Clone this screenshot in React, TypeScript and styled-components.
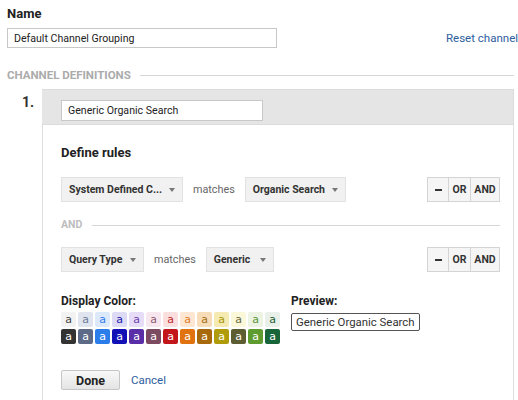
import React from 'react';
import styled, { createGlobalStyle } from 'styled-components';

const GlobalStyle = createGlobalStyle`
  body {
    margin: 0;
    background: #fff;
    font-family: Roboto, "Liberation Sans", Arial, sans-serif;
    color: #222;
  }
`;

const swatches = [
  { light: '#f2f2f2', lightText: '#444', dark: '#333333' },
  { light: '#dfe4ee', lightText: '#6b7b98', dark: '#5d6b88' },
  { light: '#dce9fb', lightText: '#2f7bef', dark: '#2b7de9' },
  { light: '#dcdaf5', lightText: '#1c18a8', dark: '#1211b5' },
  { light: '#e6dcf7', lightText: '#6a40b0', dark: '#5a2ea6' },
  { light: '#f8e6ee', lightText: '#8c5870', dark: '#7c4b61' },
  { light: '#fbdfdf', lightText: '#c0282c', dark: '#c3161a' },
  { light: '#fde6d2', lightText: '#e07a22', dark: '#e0730f' },
  { light: '#f7dcb9', lightText: '#a66f14', dark: '#a8690c' },
  { light: '#f5ebb2', lightText: '#a8960c', dark: '#b09c0b' },
  { light: '#fbf8da', lightText: '#67683c', dark: '#5c5d31' },
  { light: '#edf3e2', lightText: '#58963a', dark: '#5e9c2f' },
  { light: '#e9efe9', lightText: '#1e5e34', dark: '#19653a' },
];

const Operators = () => (
  <ButtonGroup>
    <GroupButton $w={20}>
      <Dash />
    </GroupButton>
    <GroupButton $w={21}>OR</GroupButton>
    <GroupButton $w={28}>AND</GroupButton>
  </ButtonGroup>
);

const App = () => {
  return (
    <Page>
      <GlobalStyle />
      <FieldLabel>Name</FieldLabel>
      <NameRow>
        <TextField $w={270} defaultValue="Default Channel Grouping" />
        <ResetLink href="#">Reset channel</ResetLink>
      </NameRow>

      <SectionHeading>
        <span>CHANNEL DEFINITIONS</span>
        <Rule />
      </SectionHeading>

      <DefinitionRow>
        <Index>1.</Index>
        <Card>
          <CardHeader>
            <TextField $w={202} $h={21} defaultValue="Generic Organic Search" />
          </CardHeader>
          <CardBody>
            <FieldLabel>Define rules</FieldLabel>

            <RuleRow $first>
              <Select $w={122}>System Defined C...</Select>
              <Matches>matches</Matches>
              <Select $w={101}>Organic Search</Select>
              <Operators />
            </RuleRow>

            <Separator>
              <span>AND</span>
              <Rule />
            </Separator>

            <RuleRow>
              <Select $w={83}>Query Type</Select>
              <Matches>matches</Matches>
              <Select $w={68}>Generic</Select>
              <Operators />
            </RuleRow>

            <ColorSection>
              <div>
                <SmallLabel>Display Color:</SmallLabel>
                <SwatchGrid>
                  {swatches.map((s, i) => (
                    <Swatch key={'l' + i} $bg={s.light} $fg={s.lightText}>a</Swatch>
                  ))}
                  {swatches.map((s, i) => (
                    <Swatch key={'d' + i} $bg={s.dark} $fg="#fff">a</Swatch>
                  ))}
                </SwatchGrid>
              </div>
              <div>
                <SmallLabel>Preview:</SmallLabel>
                <Preview>Generic Organic Search</Preview>
              </div>
            </ColorSection>

            <Actions>
              <DoneButton>Done</DoneButton>
              <Link href="#">Cancel</Link>
            </Actions>
          </CardBody>
        </Card>
      </DefinitionRow>
    </Page>
  );
};

export default App;

const Page = styled.div`
  width: 518px;
  height: 400px;
  overflow: hidden;
  box-sizing: border-box;
  padding: 6px 4px 0 7px;
`;

const FieldLabel = styled.div`
  font-size: 13px;
  font-weight: 700;
  line-height: 16px;
  color: #222;
`;

const SmallLabel = styled(FieldLabel)`
  font-size: 12px;
`;

const NameRow = styled.div`
  display: flex;
  align-items: center;
  margin-top: 6px;
  white-space: nowrap;
`;

const TextField = styled.input<{ $w: number; $h?: number }>`
  box-sizing: border-box;
  flex-shrink: 0;
  width: ${(p) => p.$w}px;
  height: ${(p) => p.$h ?? 20}px;
  margin: 0;
  padding: 0 6px;
  border: 1px solid #c8c8c8;
  background: #fff;
  font-family: inherit;
  font-size: 10.6px;
  color: #222;
  outline: none;
`;

const Link = styled.a`
  font-size: 11.5px;
  color: #2d5e9e;
  text-decoration: none;
  margin-left: 11px;
`;

const ResetLink = styled(Link)`
  margin-left: 169px;
  flex-shrink: 0;
`;

const SectionHeading = styled.div`
  display: flex;
  align-items: center;
  margin-top: 19px;
  font-size: 11.5px;
  font-weight: 700;
  line-height: 16px;
  color: #ababab;

  span {
    margin-right: 9px;
  }
`;

const Rule = styled.div`
  flex: 1;
  height: 1px;
  background: #d6d6d6;
`;

const DefinitionRow = styled.div`
  display: flex;
  margin-top: 6px;
`;

const Index = styled.div`
  width: 35px;
  box-sizing: border-box;
  padding: 5px 0 0 15px;
  font-size: 14px;
  font-weight: 700;
  line-height: 16px;
  color: #333;
`;

const Card = styled.div`
  flex: 1;
  display: flex;
  flex-direction: column;
`;

const CardHeader = styled.div`
  height: 36px;
  box-sizing: border-box;
  padding: 9px 0 0 19px;
  background: #e5e5e5;
  border: 1px solid #dcdcdc;
  border-left: none;
`;

const CardBody = styled.div`
  padding: 20px 13px 20px 18px;
  border-left: 1px solid #dedede;
  border-right: 1px solid #dedede;
  background: #fff;
`;

const RuleRow = styled.div<{ $first?: boolean }>`
  display: flex;
  align-items: center;
  margin-top: ${(p) => (p.$first ? 16 : 15)}px;
`;

const Select = styled.div<{ $w: number }>`
  display: flex;
  align-items: center;
  justify-content: space-between;
  width: ${(p) => p.$w}px;
  height: 25px;
  box-sizing: border-box;
  padding: 0 7px 0 7px;
  background: #f1f1f1;
  border: 1px solid #e2e2e2;
  font-size: 10.5px;
  font-weight: 700;
  color: #333;
  white-space: nowrap;

  &::after {
    content: '';
    border-left: 3.5px solid transparent;
    border-right: 3.5px solid transparent;
    border-top: 4px solid #777;
  }
`;

const Matches = styled.span`
  margin: 0 10px;
  font-size: 10.8px;
  color: #666;
`;

const ButtonGroup = styled.div`
  display: flex;
  margin-left: auto;
  height: 23px;
  border: 1px solid #d4d4d4;
  background: #f5f5f5;
`;

const GroupButton = styled.div<{ $w: number }>`
  width: ${(p) => p.$w}px;
  display: flex;
  align-items: center;
  justify-content: center;
  font-size: 10.5px;
  font-weight: 700;
  color: #333;

  & + & {
    border-left: 1px solid #d4d4d4;
  }
`;

const Dash = styled.span`
  width: 7px;
  height: 2px;
  background: #333;
`;

const Separator = styled.div`
  display: flex;
  align-items: center;
  margin-top: 16px;
  font-size: 10.5px;
  font-weight: 700;
  line-height: 14px;
  color: #bdbdbd;

  span {
    margin-right: 10px;
  }
`;

const ColorSection = styled.div`
  display: flex;
  gap: 11px;
  margin-top: 21px;
`;

const SwatchGrid = styled.div`
  display: grid;
  grid-template-columns: repeat(13, 15px);
  grid-auto-rows: 15px;
  column-gap: 2px;
  row-gap: 2px;
  margin-top: 3px;
`;

const Swatch = styled.div<{ $bg: string; $fg: string }>`
  display: flex;
  align-items: center;
  justify-content: center;
  border-radius: 2px;
  background: ${(p) => p.$bg};
  color: ${(p) => p.$fg};
  font-family: "DejaVu Sans", sans-serif;
  font-size: 11px;
  line-height: 1;
`;

const Preview = styled.div`
  display: inline-block;
  margin-top: 4px;
  padding: 0 4px;
  height: 18px;
  line-height: 16px;
  box-sizing: border-box;
  border: 1px solid #555;
  border-radius: 2px;
  font-size: 11.4px;
  color: #333;
  white-space: nowrap;
`;

const Actions = styled.div`
  display: flex;
  align-items: center;
  margin-top: 26px;
`;

const DoneButton = styled.button`
  width: 59px;
  height: 20px;
  padding: 0;
  border: 1px solid #c6c6c6;
  border-radius: 2px;
  background: linear-gradient(#f8f8f8, #e4e4e4);
  font-family: inherit;
  font-size: 12.5px;
  font-weight: 700;
  color: #222;
`;
